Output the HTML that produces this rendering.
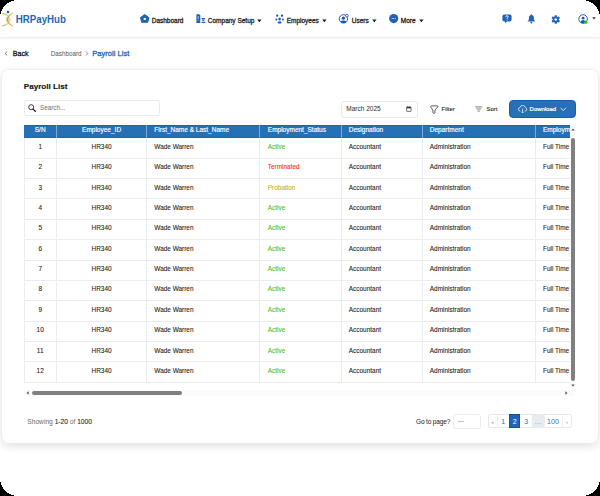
<!DOCTYPE html>
<html><head><meta charset="utf-8">
<style>
*{margin:0;padding:0;box-sizing:border-box}
html,body{width:600px;height:496px;background:#000;overflow:hidden}
body{font-family:"Liberation Sans",sans-serif;color:#222}
#scr{position:absolute;left:0;top:0;width:600px;height:496px;background:#ffffff;overflow:hidden}
.abs{position:absolute;white-space:nowrap}
#nav{position:absolute;left:0;top:0;width:600px;height:37px;background:#fff;box-shadow:0 0.5px 2px rgba(0,0,0,0.10);z-index:2}
.nt{position:absolute;font-size:6.5px;font-weight:normal;-webkit-text-stroke:0.3px #262626;color:#262626;top:16.7px;line-height:8px}
.car{position:absolute;width:0;height:0;border-left:2.4px solid transparent;border-right:2.4px solid transparent;border-top:2.8px solid #1a1a1a}
#card{position:absolute;left:2.1px;top:69.7px;width:596.3px;height:373.4px;background:#fff;border-radius:7px;box-shadow:0 0 0 0.6px #eeeeee,0 2.5px 8px rgba(0,0,0,0.13)}
.th{position:absolute;top:0;height:12.8px;line-height:10px;font-size:6.5px;font-weight:normal;-webkit-text-stroke:0.15px #fff;color:#fff;white-space:nowrap}
.td{position:absolute;height:20.37px;line-height:18px;font-size:6.45px;color:#1a1a1a;-webkit-text-stroke:0.08px currentColor;white-space:nowrap}
.pg{position:absolute;top:414.9px;height:14.2px;line-height:14.2px;text-align:center;font-size:7px;color:#2f6fb8}
</style></head>
<body><div id="scr">
<div id="nav">
  <!-- logo -->
  <svg class="abs" style="left:0;top:8px" width="20" height="20" viewBox="0 0 20 20">
    <circle cx="8" cy="4" r="1.35" fill="#1c5cb8"/>
    <path d="M12.9 5.1 C4.5 8.4 4.5 14.8 12.9 18.1 C6.6 14.6 6.6 8.6 12.9 5.1 Z" fill="#cfa52a" stroke="#cfa52a" stroke-width="0.45" stroke-linejoin="round"/>
    <path d="M2.5 5.2 Q5.6 5.5 8 7.4 Q5.4 6.3 2.5 5.6 Z" fill="#cfa52a" stroke="#cfa52a" stroke-width="0.5" stroke-linejoin="round"/>
    <path d="M2.5 18.1 Q5.4 17.5 7.6 15.7 Q5.3 17 2.5 17.7 Z" fill="#cfa52a" stroke="#cfa52a" stroke-width="0.5" stroke-linejoin="round"/>
    <path d="M9.5 9.6 Q10.2 11.6 9.5 13.6" stroke="#d6b248" stroke-width="0.8" fill="none"/>
  </svg>
  <div class="abs" style="left:15.8px;top:13.8px;font-size:9.7px;font-weight:bold;color:#1b68b6;line-height:12px;transform:scaleY(1.07);transform-origin:0 9.7px">HRPayHub</div>
  <!-- house -->
  <svg class="abs" style="left:140px;top:14px" width="10" height="9" viewBox="0 0 10 9">
    <path d="M4.7 0.7 L8.8 3.6 L7.7 8.2 L1.7 8.2 L0.6 3.6 Z" fill="#1e63b5" stroke="#1e63b5" stroke-width="1.1" stroke-linejoin="round"/>
    <rect x="3.7" y="3.9" width="2.1" height="2" fill="#fff"/>
  </svg>
  <div class="nt" style="left:151.7px">Dashboard</div>
  <!-- company -->
  <svg class="abs" style="left:195.5px;top:14px" width="10" height="9" viewBox="0 0 10 9">
    <path d="M0.4 0.3 H3 L4.3 1.3 V8.9 H0.4 Z" fill="#1e63b5"/>
    <rect x="1.6" y="2.1" width="1.2" height="3.2" fill="#8fb4e2"/>
    <rect x="1.6" y="6.4" width="1.2" height="0.8" fill="#6d9bd6"/>
    <path d="M5.4 4.1 H9.5 L8.6 5.4 H5.9 Z" fill="#1e63b5"/>
    <path d="M6 5.8 H8.9 L7.9 7 H6.4 Z" fill="#3a78c2"/>
    <rect x="5.5" y="7.7" width="3.9" height="1.2" rx="0.4" fill="#1e63b5"/>
  </svg>
  <div class="nt" style="left:207.8px">Company Setup</div>
  <svg class="abs" style="left:257.3px;top:18.7px" width="5" height="4" viewBox="0 0 5 4"><path d="M0.2 0.6 H4.6 L2.4 3.3 Z" fill="#1a1a1a"/></svg>
  <!-- employees -->
  <svg class="abs" style="left:274.5px;top:13.5px" width="10" height="10" viewBox="0 0 10 10">
    <circle cx="2.2" cy="1.7" r="1.15" fill="#1a56b0"/><circle cx="7" cy="1.7" r="1.15" fill="#1a56b0"/>
    <ellipse cx="4.6" cy="4.9" rx="1.25" ry="1.5" fill="#1a56b0"/>
    <circle cx="1.4" cy="5.4" r="1" fill="#1a56b0"/><circle cx="8" cy="5.4" r="1" fill="#1a56b0"/>
    <rect x="2.7" y="7.6" width="3.8" height="1.8" rx="0.9" fill="#1a56b0"/>
  </svg>
  <div class="nt" style="left:286.7px">Employees</div>
  <svg class="abs" style="left:322.1px;top:18.7px" width="5" height="4" viewBox="0 0 5 4"><path d="M0.2 0.6 H4.6 L2.4 3.3 Z" fill="#1a1a1a"/></svg>
  <!-- users -->
  <svg class="abs" style="left:338px;top:13.8px" width="11" height="10" viewBox="0 0 11 10">
    <circle cx="5.4" cy="4.9" r="4.2" fill="none" stroke="#1e5fb3" stroke-width="1"/>
    <circle cx="5.4" cy="4.2" r="1.6" fill="#1a56b0"/>
    <path d="M2.2 7.5 Q5.4 5.7 8.6 7.5 Q7.5 9.1 5.4 9.1 Q3.3 9.1 2.2 7.5 Z" fill="#1a56b0"/>
    <circle cx="8.9" cy="1.7" r="1.35" fill="#fff" stroke="#1e5fb3" stroke-width="0.9"/>
  </svg>
  <div class="nt" style="left:351.7px">Users</div>
  <svg class="abs" style="left:371.5px;top:18.7px" width="5" height="4" viewBox="0 0 5 4"><path d="M0.2 0.6 H4.6 L2.4 3.3 Z" fill="#1a1a1a"/></svg>
  <!-- more -->
  <svg class="abs" style="left:388.5px;top:13.8px" width="10" height="10" viewBox="0 0 10 10">
    <circle cx="4.7" cy="4.6" r="4.6" fill="#1f62b6"/>
    <circle cx="3.2" cy="4.6" r="0.5" fill="#fff"/><circle cx="4.7" cy="4.6" r="0.5" fill="#fff"/><circle cx="6.2" cy="4.6" r="0.5" fill="#fff"/>
  </svg>
  <div class="nt" style="left:400.8px">More</div>
  <svg class="abs" style="left:418.8px;top:18.7px" width="5" height="4" viewBox="0 0 5 4"><path d="M0.2 0.6 H4.6 L2.4 3.3 Z" fill="#1a1a1a"/></svg>
  <!-- help -->
  <svg class="abs" style="left:501.5px;top:14.3px" width="10" height="10" viewBox="0 0 10 10">
    <path d="M2.3 0.4 H7.7 Q9.6 0.4 9.6 2.3 V5.5 Q9.6 7.4 7.7 7.4 H4.9 L3.2 9.2 L3 7.4 H2.3 Q0.4 7.4 0.4 5.5 V2.3 Q0.4 0.4 2.3 0.4 Z" fill="#1e63b5"/>
    <path d="M3.8 3 Q3.8 1.7 5 1.7 Q6.2 1.7 6.2 2.8 Q6.2 3.6 5.1 4.1 V4.9" stroke="#fff" stroke-width="0.85" fill="none"/>
    <circle cx="5.1" cy="6" r="0.5" fill="#fff"/>
  </svg>
  <!-- bell -->
  <svg class="abs" style="left:527px;top:14px" width="9" height="10" viewBox="0 0 9 10">
    <circle cx="4.4" cy="0.9" r="0.7" fill="#1e63b5"/>
    <path d="M4.4 1.1 Q6.9 1.2 6.9 4.1 V5.5 Q7 6.6 8.4 7.5 H0.4 Q1.8 6.6 1.9 5.5 V4.1 Q1.9 1.2 4.4 1.1 Z" fill="#1e63b5"/>
    <ellipse cx="4.4" cy="8.6" rx="1" ry="0.9" fill="#1e63b5"/>
  </svg>
  <!-- gear -->
  <svg class="abs" style="left:551px;top:14.5px" width="9.5" height="9" viewBox="-5 -5 10 10">
    <g fill="#1e63b5">
      <circle r="3.4"/>
      <rect x="-1.3" y="-4.8" width="2.6" height="9.6" rx="0.6"/>
      <rect x="-1.3" y="-4.8" width="2.6" height="9.6" rx="0.6" transform="rotate(60)"/>
      <rect x="-1.3" y="-4.8" width="2.6" height="9.6" rx="0.6" transform="rotate(120)"/>
    </g>
    <circle r="1.5" fill="#fff"/>
  </svg>
  <!-- avatar -->
  <svg class="abs" style="left:577.5px;top:14px" width="11" height="11" viewBox="0 0 11 11">
    <circle cx="5.1" cy="5" r="4.3" fill="none" stroke="#1e63b5" stroke-width="1"/>
    <circle cx="5.1" cy="4.2" r="1.4" fill="#1a56b0"/>
    <path d="M2.5 8.2 Q3.3 6.1 5.1 6.1 Q6.9 6.1 7.7 8.2 Q6.6 9.2 5.1 9.2 Q3.6 9.2 2.5 8.2 Z" fill="#1a56b0"/>
    <circle cx="7.9" cy="8.2" r="1.6" fill="#22c722"/>
  </svg>
  <svg class="abs" style="left:591.6px;top:16.7px" width="5" height="3" viewBox="0 0 5 3"><path d="M0.2 0.2 H3.8 L2 2.3 Z" fill="#222"/></svg>

</div>

<!-- back / breadcrumb -->
<svg class="abs" style="left:3.5px;top:51.3px" width="4" height="5" viewBox="0 0 4 5"><path d="M3.2 0.5 L1.1 2.4 L3.2 4.3" stroke="#555" stroke-width="0.75" fill="none"/></svg>
<div class="abs" style="left:12.8px;top:49.7px;font-size:7.1px;-webkit-text-stroke:0.3px #1a1a1a;color:#1a1a1a;line-height:8px">Back</div>
<div class="abs" style="left:50.7px;top:49.5px;font-size:6.3px;color:#555;line-height:8px">Dashboard</div>
<svg class="abs" style="left:85px;top:51px" width="4" height="5" viewBox="0 0 4 5"><path d="M1 0.6 L2.8 2.5 L1 4.4" stroke="#555" stroke-width="0.7" fill="none"/></svg>
<div class="abs" style="left:92.2px;top:49.6px;font-size:7.6px;-webkit-text-stroke:0.3px #1e68b8;color:#1e68b8;line-height:8px">Payroll List</div>
<div id="card"></div>
<div class="abs" style="left:23.8px;top:82px;font-size:8.1px;font-weight:bold;color:#141414;-webkit-text-stroke:0.15px #141414;line-height:10px">Payroll List</div>
<!-- search -->
<div class="abs" style="left:24px;top:100.4px;width:135.5px;height:15.2px;border:0.8px solid #e9e9e9;border-radius:3px;background:#fff"></div>
<svg class="abs" style="left:28px;top:104px" width="8" height="8" viewBox="0 0 8 8"><circle cx="3.2" cy="3.2" r="2.5" stroke="#333" stroke-width="0.95" fill="none"/><path d="M5.1 5.1 L7.3 7.3" stroke="#222" stroke-width="1.3" stroke-linecap="round"/></svg>
<div class="abs" style="left:40px;top:104.2px;font-size:6.3px;color:#707070;line-height:7.5px">Search...</div>
<!-- date -->
<div class="abs" style="left:341px;top:100.6px;width:77.4px;height:17.2px;border:0.8px solid #e9e9e9;border-radius:3px;background:#fff"></div>
<div class="abs" style="left:346.3px;top:104.8px;font-size:6.5px;color:#2a2a2a;line-height:8px">March 2025</div>
<svg class="abs" style="left:405.5px;top:106px" width="6" height="6" viewBox="0 0 6 6"><rect x="0.6" y="1.1" width="4.4" height="4.3" rx="0.5" fill="none" stroke="#2a2a2a" stroke-width="0.65"/><rect x="0.6" y="1.1" width="4.4" height="1.2" fill="#2a2a2a"/><path d="M1.7 0.2 V1.2 M3.9 0.2 V1.2" stroke="#2a2a2a" stroke-width="0.6"/></svg>
<!-- filter -->
<svg class="abs" style="left:429.6px;top:104.6px" width="9" height="9" viewBox="0 0 9 9"><path d="M1.4 0.9 Q0.7 0.9 0.7 1.6 Q0.7 2.2 1.3 2.9 L2.9 4.9 V7.6 Q2.9 8.4 3.9 8.4 Q4.9 8.4 4.9 7.6 V5.1 L7.9 1.8 Q8.4 1.0 7.5 0.9 Z" fill="none" stroke="#2a2a2a" stroke-width="0.75" stroke-linejoin="round"/></svg>
<div class="abs" style="left:441.6px;top:106.1px;font-size:5.85px;color:#222;-webkit-text-stroke:0.1px #222;line-height:7px">Filter</div>
<!-- sort -->
<svg class="abs" style="left:475px;top:105.6px" width="8" height="7" viewBox="0 0 8 7"><path d="M0.2 0.9 H7.2 M1.3 3 H6.1 M2.5 5.1 H4.9" stroke="#2a2a2a" stroke-width="0.6"/></svg>
<div class="abs" style="left:486.6px;top:106.1px;font-size:5.9px;color:#222;-webkit-text-stroke:0.1px #222;line-height:7px">Sort</div>
<!-- download -->
<div class="abs" style="left:508.6px;top:100px;width:67.3px;height:17.6px;border-radius:4px;background:#2670b8;border:0.8px solid #1b5fac"></div>
<svg class="abs" style="left:517.6px;top:105.2px" width="10" height="9" viewBox="0 0 10 9"><path d="M2.3 6.1 Q0.4 6.1 0.4 4.3 Q0.4 2.8 1.9 2.6 Q2.4 0.4 4.6 0.4 Q6.9 0.4 7.3 2.6 Q8.8 2.8 8.8 4.3 Q8.8 6.1 6.9 6.1" fill="none" stroke="#fff" stroke-width="0.7"/><path d="M4.6 3.5 V7.9 M3.5 6.8 L4.6 7.9 L5.7 6.8" fill="none" stroke="#fff" stroke-width="0.7"/></svg>
<div class="abs" style="left:529.6px;top:106.1px;font-size:5.95px;-webkit-text-stroke:0.22px #fff;color:#fff;line-height:7px">Download</div>
<svg class="abs" style="left:559.6px;top:106.6px" width="7" height="5" viewBox="0 0 7 5"><path d="M0.6 0.8 L3.3 3.6 L6 0.8" fill="none" stroke="#e6eef9" stroke-width="0.9"/></svg>

<!--TABLE-->
<div id="tbl" style="position:absolute;left:24px;top:125px;width:545.7px;height:257.5px;overflow:hidden;background:#fff">
<div style="position:absolute;left:0;top:0.2px;width:620px;height:12.4px;background:#2670b6;border-top:0.8px solid #1d62ad;border-bottom:0.8px solid #1d62ad"></div>
<div class="th" style="left:0px;width:32.40px;text-align:center">S/N</div>
<div style="position:absolute;left:32px;top:0;width:1px;height:12.8px;background:#80a9d6"></div>
<div class="th" style="left:32.4px;width:90.40px;text-align:center">Employee_ID</div>
<div style="position:absolute;left:122px;top:0;width:1px;height:12.8px;background:#80a9d6"></div>
<div class="th" style="left:130.30px">First_Name &amp; Last_Name</div>
<div style="position:absolute;left:235px;top:0;width:1px;height:12.8px;background:#80a9d6"></div>
<div class="th" style="left:243.80px">Employment_Status</div>
<div style="position:absolute;left:317px;top:0;width:1px;height:12.8px;background:#80a9d6"></div>
<div class="th" style="left:324.80px">Designation</div>
<div style="position:absolute;left:398px;top:0;width:1px;height:12.8px;background:#80a9d6"></div>
<div class="th" style="left:405.80px">Department</div>
<div style="position:absolute;left:511px;top:0;width:1px;height:12.8px;background:#80a9d6"></div>
<div class="th" style="left:519.00px">Employment_Type</div>
<div style="position:absolute;left:0;top:32.67px;width:620px;height:1px;background:#eaecef"></div>
<div class="td" style="left:0px;top:12.80px;width:32.40px;text-align:center">1</div>
<div class="td" style="left:32.4px;top:12.80px;width:90.40px;text-align:center">HR340</div>
<div class="td" style="left:130.30px;top:12.80px">Wade Warren</div>
<div class="td" style="left:243.80px;top:12.80px;color:#48c02c">Active</div>
<div class="td" style="left:324.80px;top:12.80px">Accountant</div>
<div class="td" style="left:405.80px;top:12.80px">Administration</div>
<div class="td" style="left:519.00px;top:12.80px">Full Time</div>
<div style="position:absolute;left:0;top:53.04px;width:620px;height:1px;background:#eaecef"></div>
<div class="td" style="left:0px;top:33.17px;width:32.40px;text-align:center">2</div>
<div class="td" style="left:32.4px;top:33.17px;width:90.40px;text-align:center">HR340</div>
<div class="td" style="left:130.30px;top:33.17px">Wade Warren</div>
<div class="td" style="left:243.80px;top:33.17px;color:#ff1a1a">Terminated</div>
<div class="td" style="left:324.80px;top:33.17px">Accountant</div>
<div class="td" style="left:405.80px;top:33.17px">Administration</div>
<div class="td" style="left:519.00px;top:33.17px">Full Time</div>
<div style="position:absolute;left:0;top:73.41px;width:620px;height:1px;background:#eaecef"></div>
<div class="td" style="left:0px;top:53.54px;width:32.40px;text-align:center">3</div>
<div class="td" style="left:32.4px;top:53.54px;width:90.40px;text-align:center">HR340</div>
<div class="td" style="left:130.30px;top:53.54px">Wade Warren</div>
<div class="td" style="left:243.80px;top:53.54px;color:#c2b02c">Probation</div>
<div class="td" style="left:324.80px;top:53.54px">Accountant</div>
<div class="td" style="left:405.80px;top:53.54px">Administration</div>
<div class="td" style="left:519.00px;top:53.54px">Full Time</div>
<div style="position:absolute;left:0;top:93.78px;width:620px;height:1px;background:#eaecef"></div>
<div class="td" style="left:0px;top:73.91px;width:32.40px;text-align:center">4</div>
<div class="td" style="left:32.4px;top:73.91px;width:90.40px;text-align:center">HR340</div>
<div class="td" style="left:130.30px;top:73.91px">Wade Warren</div>
<div class="td" style="left:243.80px;top:73.91px;color:#48c02c">Active</div>
<div class="td" style="left:324.80px;top:73.91px">Accountant</div>
<div class="td" style="left:405.80px;top:73.91px">Administration</div>
<div class="td" style="left:519.00px;top:73.91px">Full Time</div>
<div style="position:absolute;left:0;top:114.15px;width:620px;height:1px;background:#eaecef"></div>
<div class="td" style="left:0px;top:94.28px;width:32.40px;text-align:center">5</div>
<div class="td" style="left:32.4px;top:94.28px;width:90.40px;text-align:center">HR340</div>
<div class="td" style="left:130.30px;top:94.28px">Wade Warren</div>
<div class="td" style="left:243.80px;top:94.28px;color:#48c02c">Active</div>
<div class="td" style="left:324.80px;top:94.28px">Accountant</div>
<div class="td" style="left:405.80px;top:94.28px">Administration</div>
<div class="td" style="left:519.00px;top:94.28px">Full Time</div>
<div style="position:absolute;left:0;top:134.52px;width:620px;height:1px;background:#eaecef"></div>
<div class="td" style="left:0px;top:114.65px;width:32.40px;text-align:center">6</div>
<div class="td" style="left:32.4px;top:114.65px;width:90.40px;text-align:center">HR340</div>
<div class="td" style="left:130.30px;top:114.65px">Wade Warren</div>
<div class="td" style="left:243.80px;top:114.65px;color:#48c02c">Active</div>
<div class="td" style="left:324.80px;top:114.65px">Accountant</div>
<div class="td" style="left:405.80px;top:114.65px">Administration</div>
<div class="td" style="left:519.00px;top:114.65px">Full Time</div>
<div style="position:absolute;left:0;top:154.89px;width:620px;height:1px;background:#eaecef"></div>
<div class="td" style="left:0px;top:135.02px;width:32.40px;text-align:center">7</div>
<div class="td" style="left:32.4px;top:135.02px;width:90.40px;text-align:center">HR340</div>
<div class="td" style="left:130.30px;top:135.02px">Wade Warren</div>
<div class="td" style="left:243.80px;top:135.02px;color:#48c02c">Active</div>
<div class="td" style="left:324.80px;top:135.02px">Accountant</div>
<div class="td" style="left:405.80px;top:135.02px">Administration</div>
<div class="td" style="left:519.00px;top:135.02px">Full Time</div>
<div style="position:absolute;left:0;top:175.26px;width:620px;height:1px;background:#eaecef"></div>
<div class="td" style="left:0px;top:155.39px;width:32.40px;text-align:center">8</div>
<div class="td" style="left:32.4px;top:155.39px;width:90.40px;text-align:center">HR340</div>
<div class="td" style="left:130.30px;top:155.39px">Wade Warren</div>
<div class="td" style="left:243.80px;top:155.39px;color:#48c02c">Active</div>
<div class="td" style="left:324.80px;top:155.39px">Accountant</div>
<div class="td" style="left:405.80px;top:155.39px">Administration</div>
<div class="td" style="left:519.00px;top:155.39px">Full Time</div>
<div style="position:absolute;left:0;top:195.63px;width:620px;height:1px;background:#eaecef"></div>
<div class="td" style="left:0px;top:175.76px;width:32.40px;text-align:center">9</div>
<div class="td" style="left:32.4px;top:175.76px;width:90.40px;text-align:center">HR340</div>
<div class="td" style="left:130.30px;top:175.76px">Wade Warren</div>
<div class="td" style="left:243.80px;top:175.76px;color:#48c02c">Active</div>
<div class="td" style="left:324.80px;top:175.76px">Accountant</div>
<div class="td" style="left:405.80px;top:175.76px">Administration</div>
<div class="td" style="left:519.00px;top:175.76px">Full Time</div>
<div style="position:absolute;left:0;top:216.00px;width:620px;height:1px;background:#eaecef"></div>
<div class="td" style="left:0px;top:196.13px;width:32.40px;text-align:center">10</div>
<div class="td" style="left:32.4px;top:196.13px;width:90.40px;text-align:center">HR340</div>
<div class="td" style="left:130.30px;top:196.13px">Wade Warren</div>
<div class="td" style="left:243.80px;top:196.13px;color:#48c02c">Active</div>
<div class="td" style="left:324.80px;top:196.13px">Accountant</div>
<div class="td" style="left:405.80px;top:196.13px">Administration</div>
<div class="td" style="left:519.00px;top:196.13px">Full Time</div>
<div style="position:absolute;left:0;top:236.37px;width:620px;height:1px;background:#eaecef"></div>
<div class="td" style="left:0px;top:216.50px;width:32.40px;text-align:center">11</div>
<div class="td" style="left:32.4px;top:216.50px;width:90.40px;text-align:center">HR340</div>
<div class="td" style="left:130.30px;top:216.50px">Wade Warren</div>
<div class="td" style="left:243.80px;top:216.50px;color:#48c02c">Active</div>
<div class="td" style="left:324.80px;top:216.50px">Accountant</div>
<div class="td" style="left:405.80px;top:216.50px">Administration</div>
<div class="td" style="left:519.00px;top:216.50px">Full Time</div>
<div style="position:absolute;left:0;top:256.74px;width:620px;height:1px;background:#eaecef"></div>
<div class="td" style="left:0px;top:236.87px;width:32.40px;text-align:center">12</div>
<div class="td" style="left:32.4px;top:236.87px;width:90.40px;text-align:center">HR340</div>
<div class="td" style="left:130.30px;top:236.87px">Wade Warren</div>
<div class="td" style="left:243.80px;top:236.87px;color:#48c02c">Active</div>
<div class="td" style="left:324.80px;top:236.87px">Accountant</div>
<div class="td" style="left:405.80px;top:236.87px">Administration</div>
<div class="td" style="left:519.00px;top:236.87px">Full Time</div>
<div style="position:absolute;left:32px;top:12.8px;width:1px;height:244.44px;background:#eaecef"></div>
<div style="position:absolute;left:122px;top:12.8px;width:1px;height:244.44px;background:#eaecef"></div>
<div style="position:absolute;left:235px;top:12.8px;width:1px;height:244.44px;background:#eaecef"></div>
<div style="position:absolute;left:317px;top:12.8px;width:1px;height:244.44px;background:#eaecef"></div>
<div style="position:absolute;left:398px;top:12.8px;width:1px;height:244.44px;background:#eaecef"></div>
<div style="position:absolute;left:511px;top:12.8px;width:1px;height:244.44px;background:#eaecef"></div>
<div style="position:absolute;left:0;top:12.8px;width:1px;height:244.44px;background:#eaecef"></div>
</div>
<!--/TABLE-->
<!-- scrollbars -->
<div class="abs" style="left:569.7px;top:125px;width:5.8px;height:264.5px;background:#fafafa"></div>
<svg class="abs" style="left:570.5px;top:127.5px" width="4" height="3" viewBox="0 0 4 3"><path d="M0.3 2.6 L2 0.6 L3.7 2.6 Z" fill="#505050"/></svg>
<div class="abs" style="left:571.1px;top:137.5px;width:3.6px;height:243.5px;background:#808080;border-radius:2px"></div>
<svg class="abs" style="left:570.5px;top:384px" width="4" height="3" viewBox="0 0 4 3"><path d="M0.3 0.4 L2 2.4 L3.7 0.4 Z" fill="#505050"/></svg>
<div class="abs" style="left:24px;top:389.5px;width:545.7px;height:6.5px;background:#fafafa"></div>
<svg class="abs" style="left:25.8px;top:391.2px" width="3" height="4" viewBox="0 0 3 4"><path d="M2.6 0.3 L0.6 2 L2.6 3.7 Z" fill="#505050"/></svg>
<div class="abs" style="left:32px;top:390.7px;width:150.3px;height:4.3px;background:#808080;border-radius:2.2px"></div>
<svg class="abs" style="left:564.8px;top:391.2px" width="3" height="4" viewBox="0 0 3 4"><path d="M0.4 0.3 L2.4 2 L0.4 3.7 Z" fill="#505050"/></svg>
<div class="abs" style="left:569.7px;top:389.5px;width:5.8px;height:6.5px;background:#fafafa"></div>
<!-- footer -->
<div class="abs" style="left:27.3px;top:418.2px;font-size:6.65px;color:#6a6a6a;line-height:7px">Showing <b style="color:#2a2a2a;font-weight:normal;-webkit-text-stroke:0.1px #2a2a2a">1-20</b> of <b style="color:#2a2a2a;font-weight:normal;-webkit-text-stroke:0.1px #2a2a2a">1000</b></div>
<div class="abs" style="left:416px;top:417.8px;font-size:6.6px;letter-spacing:-0.2px;color:#222;line-height:7px">Go to page?</div>
<div class="abs" style="left:453.3px;top:414px;width:27.4px;height:14.7px;border:0.8px solid #ececec;border-radius:2.5px;background:#fff"></div>
<div class="abs" style="left:458px;top:421.3px;width:6px;height:0.8px;background:#c4c4c4"></div>
<div id="pag" style="position:absolute;left:488.2px;top:414.2px;width:84.2px;height:14.2px;border:0.8px solid #e4e7eb;border-radius:2.5px;background:#fff"></div>
<div class="abs" style="left:497.2px;top:414.6px;width:0.8px;height:13.4px;background:#eceef1"></div>
<div class="abs" style="left:509px;top:414.2px;width:11.4px;height:14.2px;background:#1b66b8;border:0.6px solid #14519a"></div>
<div class="abs" style="left:532.2px;top:415px;width:11.5px;height:12.6px;background:#e9ecef"></div>
<div class="abs" style="left:543.7px;top:414.6px;width:0.6px;height:13.4px;background:#eceef1"></div>
<div class="abs" style="left:562.2px;top:414.6px;width:0.6px;height:13.4px;background:#eceef1"></div>
<div class="pg" style="left:488.2px;width:9px;font-size:5px;color:#6f9bd0">&#171;</div>
<div class="pg" style="left:497.6px;width:11.4px">1</div>
<div class="pg" style="left:509px;width:11.4px;color:#fff">2</div>
<div class="pg" style="left:520.4px;width:11.8px">3</div>
<div class="pg" style="left:532.2px;width:11.5px;color:#8a9099">&#8230;</div>
<div class="pg" style="left:543.7px;width:18.5px">100</div>
<div class="pg" style="left:562.2px;width:10px;font-size:5px;color:#8a7a66">&#8250;</div>


<svg style="position:absolute;left:0;top:0;z-index:50" width="600" height="496" viewBox="0 0 600 496" shape-rendering="crispEdges">
<path d="M0 0 L14 0 L14 1 L11 1 L11 2 L9 2 L9 3 L7 3 L7 4 L6 4 L6 5 L5 5 L5 6 L4 6 L4 7 L3 7 L3 9 L2 9 L2 11 L1 11 L1 14 L0 14 Z" fill="#000"/>
<path d="M0 0 L14 0 L14 1 L11 1 L11 2 L9 2 L9 3 L7 3 L7 4 L6 4 L6 5 L5 5 L5 6 L4 6 L4 7 L3 7 L3 9 L2 9 L2 11 L1 11 L1 14 L0 14 Z" fill="#000" transform="translate(600 0) scale(-1 1)"/>
<path d="M0 0 L14 0 L14 1 L11 1 L11 2 L9 2 L9 3 L7 3 L7 4 L6 4 L6 5 L5 5 L5 6 L4 6 L4 7 L3 7 L3 9 L2 9 L2 11 L1 11 L1 14 L0 14 Z" fill="#000" transform="translate(0 496) scale(1 -1)"/>
<path d="M0 0 L14 0 L14 1 L11 1 L11 2 L9 2 L9 3 L7 3 L7 4 L6 4 L6 5 L5 5 L5 6 L4 6 L4 7 L3 7 L3 9 L2 9 L2 11 L1 11 L1 14 L0 14 Z" fill="#000" transform="translate(600 496) scale(-1 -1)"/>
</svg>
</div></body></html>
